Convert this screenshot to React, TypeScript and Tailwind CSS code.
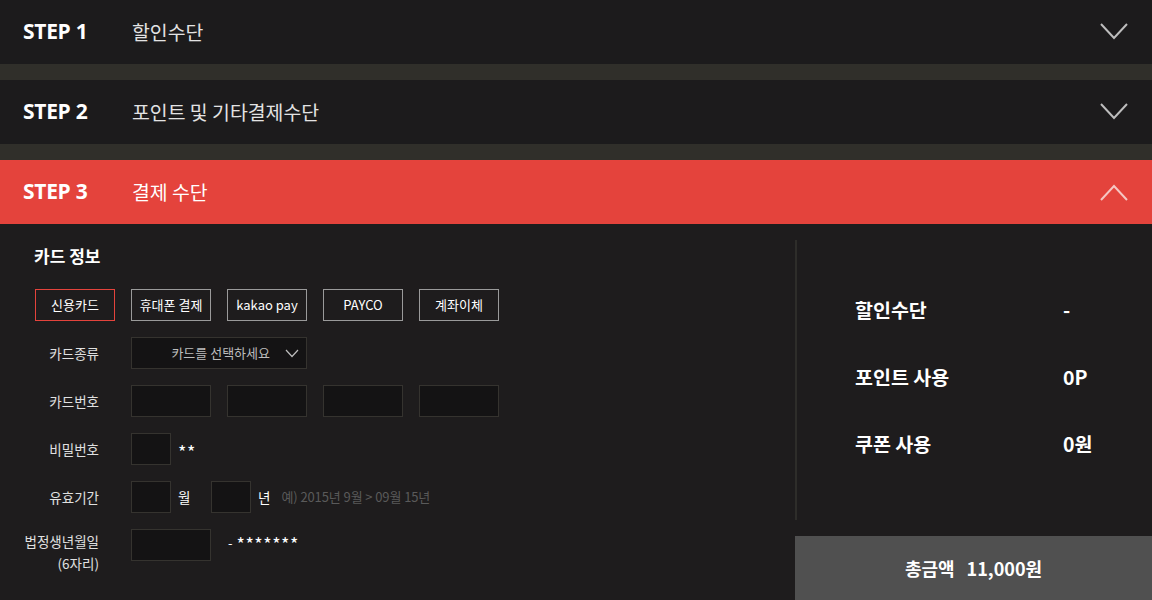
import React from "react";

const KR = { fontFamily: '"Noto Sans CJK KR", "Noto Sans", sans-serif' };
const EN = { fontFamily: '"Open Sans", "Noto Sans CJK KR", sans-serif' };

function Chevron({ up }: { up?: boolean }) {
  return (
    <svg width="28" height="18" viewBox="0 0 28 18" className="shrink-0">
      <polyline
        points={up ? "1,17 14,3 27,17" : "1,1 14,15 27,1"}
        fill="none"
        stroke={up ? "#f5c6c2" : "#bdbdbd"}
        strokeWidth="2"
      />
    </svg>
  );
}

function StepHeader({ step, title, active }: { step: string; title: string; active?: boolean }) {
  return (
    <div
      className={`h-16 flex items-center pl-[23px] pr-[24px] ${active ? "bg-[#e4433c]" : "bg-[#1c1b1c]"}`}
    >
      <div className="w-[109px] text-[21px] font-bold text-white tracking-[-0.3px]" style={EN}>
        {step}
      </div>
      <div className={`text-[19.4px] flex-1 ${active ? "text-white" : "text-[#e3e3e3]"}`} style={KR}>
        {title}
      </div>
      <Chevron up={active} />
    </div>
  );
}

function Box({ w }: { w: string }) {
  return <div className={`${w} h-8 shrink-0 bg-[#141314] border border-[#35332f]`} />;
}

function Label({ children }: { children: React.ReactNode }) {
  return (
    <div
      className="w-[90px] -ml-[26px] mr-[32px] shrink-0 text-right text-[13.5px] text-[#e0e0e0] leading-[22px] whitespace-nowrap"
      style={KR}
    >
      {children}
    </div>
  );
}

export default function App() {
  const methods = ["신용카드", "휴대폰 결제", "kakao pay", "PAYCO", "계좌이체"];
  return (
    <div className="w-[1152px] h-[600px] bg-[#1e1c1d] overflow-hidden" style={KR}>
      <StepHeader step="STEP 1" title="할인수단" />
      <div className="h-4 bg-[#302f2a]" />
      <StepHeader step="STEP 2" title="포인트 및 기타결제수단" />
      <div className="h-4 bg-[#302f2a]" />
      <StepHeader step="STEP 3" title="결제 수단" active />
      <div className="flex h-[376px]">
        {/* left */}
        <div className="w-[795px] shrink-0 pl-[35px] pt-[20px]">
          <div className="text-[17px] font-bold text-white leading-6 -ml-px">카드 정보</div>
          <div className="flex gap-4 mt-[21px]">
            {methods.map((m, i) => (
              <div
                key={m}
                className={`w-20 h-8 flex items-center justify-center text-[13px] text-white border ${
                  i === 0 ? "border-[#e4433c]" : "border-[#9a9a9a]"
                }`}
              >
                {m}
              </div>
            ))}
          </div>
          <div className="flex items-center mt-4">
            <Label>카드종류</Label>
            <div className="w-[176px] h-8 bg-[#141314] border border-[#35332f] flex items-center justify-end pr-[7px] gap-[15px]">
              <span className="text-[13px] text-[#bdbdbd]">카드를 선택하세요</span>
              <svg width="14" height="9" viewBox="0 0 14 9">
                <polyline points="1,1 7,7.5 13,1" fill="none" stroke="#bdbdbd" strokeWidth="1.2" />
              </svg>
            </div>
          </div>
          <div className="flex items-center mt-4">
            <Label>카드번호</Label>
            <div className="flex gap-4">
              <Box w="w-20" />
              <Box w="w-20" />
              <Box w="w-20" />
              <Box w="w-20" />
            </div>
          </div>
          <div className="flex items-center mt-4">
            <Label>비밀번호</Label>
            <Box w="w-10" />
            <span className="ml-[7px] text-[18px] leading-5 text-white mt-[4px] tracking-[0.5px]">**</span>
          </div>
          <div className="flex items-center mt-4">
            <Label>유효기간</Label>
            <Box w="w-10" />
            <span className="ml-[7px] w-[33px] text-[13.5px] text-white">월</span>
            <Box w="w-10" />
            <span className="ml-[7px] text-[13.5px] text-white">년</span>
            <span className="ml-[11px] text-[13px] text-[#5a5a5a] tracking-[-0.1px]">
              예) 2015년 9월 &gt; 09월 15년
            </span>
          </div>
          <div className="flex items-start mt-4">
            <div className="pt-[1px]">
              <Label>
                법정생년월일
                <br />
                (6자리)
              </Label>
            </div>
            <Box w="w-20" />
            <span className="ml-[17px] text-[13px] text-white leading-4 mt-[6px]">-</span>
            <span className="ml-[4px] text-[18px] text-white leading-5 mt-[4px] tracking-[0.5px]">*******</span>
          </div>
        </div>
        {/* right */}
        <div className="flex-1 flex flex-col">
          <div className="mt-4 h-[280px] border-l-2 border-[#2e2d2a] pl-[58px] pt-[58px] flex flex-col gap-[43px]">
            {[
              ["할인수단", "-"],
              ["포인트 사용", "0P"],
              ["쿠폰 사용", "0원"],
            ].map(([k, v]) => (
              <div key={k} className="flex items-center h-6 text-[19.5px] font-bold text-white">
                <div className="w-[208px]">{k}</div>
                <div>{v}</div>
              </div>
            ))}
          </div>
          <div className="mt-4 h-16 bg-[#505050] flex items-center justify-center gap-[12px] text-[18px] font-bold text-white">
            <span>총금액</span>
            <span>11,000원</span>
          </div>
        </div>
      </div>
    </div>
  );
}
